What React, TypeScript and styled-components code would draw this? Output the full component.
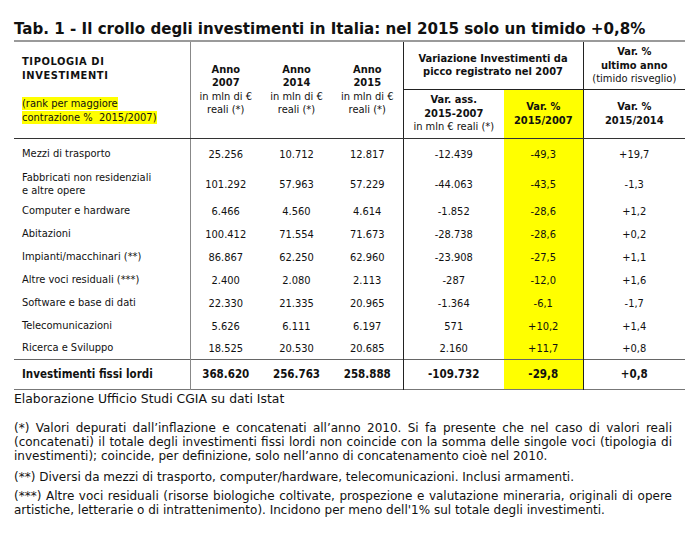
import React from "react";
import styled, { createGlobalStyle } from "styled-components";

const Global = createGlobalStyle`
  html, body { margin: 0; padding: 0; background: #fff; }
  body { color: #111; }
`;

const Page = styled.div`
  width: 700px;
  height: 540px;
  padding: 19px 15px 0 14px;
  box-sizing: border-box;
  font-family: "DejaVu Sans", Verdana, sans-serif;
`;

const Title = styled.h1`
  margin: 0;
  font-family: "DejaVu Sans", Verdana, sans-serif;
  font-size: 15.1px;
  font-weight: bold;
  line-height: 20px;
  color: #111;
  white-space: nowrap;
`;

const Table = styled.table`
  margin-top: 1px;
  width: 671px;
  border-collapse: collapse;
  table-layout: fixed;
  font-family: "DejaVu Sans Condensed", "DejaVu Sans", sans-serif;
  font-stretch: condensed;
  font-size: 11px;
  color: #111;
  border-top: 2px solid #9a9a9a;
  border-bottom: 1px solid #777;
`;

const HeadCell = styled.th<{ $yellow?: boolean; $line?: boolean; $under?: boolean; $base?: boolean }>`
  font-weight: normal;
  text-align: center;
  vertical-align: middle;
  line-height: 13.5px;
  padding: 0 2px;
  background: ${(p) => (p.$yellow ? "#ffff00" : "transparent")};
  border-right: ${(p) => (p.$line ? "1px solid #222" : "none")};
  border-bottom: ${(p) => (p.$under ? "1px solid #222" : p.$base ? "1px solid #333" : "none")};
`;

const FirstHead = styled.th`
  font-weight: normal;
  text-align: left;
  vertical-align: top;
  padding: 13px 0 0 8px;
  line-height: 13.5px;
  border-right: 1px solid #888;
  border-bottom: 1px solid #333;
`;

const Bold = styled.div`
  font-weight: bold;
`;

const Caps = styled.div`
  font-weight: bold;
  letter-spacing: 0.6px;
`;

const Mark = styled.span`
  background: #ffff00;
`;

const Rank = styled.div`
  margin-top: 15px;
`;

const Row = styled.tr<{ $kind: "first" | "tall" | "last" | "plain" }>`
  height: ${(p) => ({ first: 28, tall: 34, last: 21, plain: 23 })[p.$kind]}px;
  & > td {
    padding-top: ${(p) => ({ first: 5, tall: 4, last: 1, plain: 0 })[p.$kind]}px;
  }
`;

const TotalRow = styled.tr`
  height: 30px;
  font-weight: bold;
  font-size: 11.5px;
  & > td {
    border-top: 1px solid #666;
  }
`;

const Label = styled.td`
  text-align: left;
  padding-left: 8px;
  line-height: 12.5px;
  border-right: 1px solid #888;
  vertical-align: middle;
`;

const Cell = styled.td<{ $yellow?: boolean; $line?: boolean }>`
  text-align: center;
  vertical-align: middle;
  background: ${(p) => (p.$yellow ? "#ffff00" : "transparent")};
  border-right: ${(p) => (p.$line ? "1px solid #222" : "none")};
`;

const Notes = styled.div`
  font-family: "DejaVu Sans", Verdana, sans-serif;
  font-size: 12px;
  line-height: 14px;
  color: #111;
`;

const Source = styled.p`
  margin: 1px 0 0 0;
  font-size: 12.4px;
  line-height: 16px;
`;

const Note = styled.p`
  margin: 0 0 5px 0;
  text-align: justify;
  width: 658px;
`;

const FirstNote = styled(Note)`
  margin-top: 14px;
  margin-bottom: 7px;
`;

type R = { label: React.ReactNode; v: string[]; tall?: boolean };

const rows: R[] = [
  { label: "Mezzi di trasporto", v: ["25.256", "10.712", "12.817", "-12.439", "-49,3", "+19,7"] },
  {
    label: (
      <>
        Fabbricati non residenziali
        <br />e altre opere
      </>
    ),
    v: ["101.292", "57.963", "57.229", "-44.063", "-43,5", "-1,3"],
    tall: true,
  },
  { label: "Computer e hardware", v: ["6.466", "4.560", "4.614", "-1.852", "-28,6", "+1,2"] },
  { label: "Abitazioni", v: ["100.412", "71.554", "71.673", "-28.738", "-28,6", "+0,2"] },
  { label: "Impianti/macchinari (**)", v: ["86.867", "62.250", "62.960", "-23.908", "-27,5", "+1,1"] },
  { label: "Altre voci residuali (***)", v: ["2.400", "2.080", "2.113", "-287", "-12,0", "+1,6"] },
  { label: "Software e base di dati", v: ["22.330", "21.335", "20.965", "-1.364", "-6,1", "-1,7"] },
  { label: "Telecomunicazioni", v: ["5.626", "6.111", "6.197", "571", "+10,2", "+1,4"] },
  { label: "Ricerca e Sviluppo", v: ["18.525", "20.530", "20.685", "2.160", "+11,7", "+0,8"] },
];

const total = ["368.620", "256.763", "258.888", "-109.732", "-29,8", "+0,8"];

function Cells({ v }: { v: string[] }) {
  return (
    <>
      <Cell>{v[0]}</Cell>
      <Cell>{v[1]}</Cell>
      <Cell $line>{v[2]}</Cell>
      <Cell>{v[3]}</Cell>
      <Cell $yellow $line>
        {v[4]}
      </Cell>
      <Cell>{v[5]}</Cell>
    </>
  );
}

const widths = [176, 71, 71, 71, 101, 79, 102];

export default function App() {
  return (
    <Page>
      <Global />
      <Title>Tab. 1 - Il crollo degli investimenti in Italia: nel 2015 solo un timido +0,8%</Title>
      <Table>
        <colgroup>
          {widths.map((w, i) => (
            <col key={i} width={w} />
          ))}
        </colgroup>
        <thead>
          <tr style={{ height: 48 }}>
            <FirstHead rowSpan={2}>
              <Caps>
                TIPOLOGIA DI
                <br />
                INVESTIMENTI
              </Caps>
              <Rank>
                <Mark>(rank per maggiore</Mark>
                <br />
                <Mark>contrazione %&nbsp;&nbsp;2015/2007)</Mark>
              </Rank>
            </FirstHead>
            {["2007", "2014", "2015"].map((y, i) => (
              <HeadCell key={y} rowSpan={2} $line={i === 2} $base>
                <Bold>
                  Anno
                  <br />
                  {y}
                </Bold>
                in mln di €
                <br />
                reali (*)
              </HeadCell>
            ))}
            <HeadCell colSpan={2} $line $under>
              <Bold>
                Variazione Investimenti da
                <br />
                picco registrato nel 2007
              </Bold>
            </HeadCell>
            <HeadCell $under>
              <Bold>
                Var. %
                <br />
                ultimo anno
              </Bold>
              (timido risveglio)
            </HeadCell>
          </tr>
          <tr style={{ height: 49 }}>
            <HeadCell $base>
              <Bold>
                Var. ass.
                <br />
                2015-2007
              </Bold>
              in mln € reali (*)
            </HeadCell>
            <HeadCell $yellow $line $base>
              <Bold>
                Var. %
                <br />
                2015/2007
              </Bold>
            </HeadCell>
            <HeadCell $base>
              <Bold>
                Var. %
                <br />
                2015/2014
              </Bold>
            </HeadCell>
          </tr>
        </thead>
        <tbody>
          {rows.map((r, i) => (
            <Row
              key={i}
              $kind={i === 0 ? "first" : r.tall ? "tall" : i === rows.length - 1 ? "last" : "plain"}
            >
              <Label>{r.label}</Label>
              <Cells v={r.v} />
            </Row>
          ))}
          <TotalRow>
            <Label>Investimenti fissi lordi</Label>
            <Cells v={total} />
          </TotalRow>
        </tbody>
      </Table>
      <Notes>
        <Source>Elaborazione Ufficio Studi CGIA su dati Istat</Source>
        <FirstNote>
          (*) Valori depurati dall’inflazione e concatenati all’anno 2010. Si fa presente che nel caso di valori reali
          (concatenati) il totale degli investimenti fissi lordi non coincide con la somma delle singole voci (tipologia di
          investimenti); coincide, per definizione, solo nell’anno di concatenamento cioè nel 2010.
        </FirstNote>
        <Note>(**) Diversi da mezzi di trasporto, computer/hardware, telecomunicazioni. Inclusi armamenti.</Note>
        <Note>
          (***) Altre voci residuali (risorse biologiche coltivate, prospezione e valutazione mineraria, originali di opere
          artistiche, letterarie o di intrattenimento). Incidono per meno dell'1% sul totale degli investimenti.
        </Note>
      </Notes>
    </Page>
  );
}
